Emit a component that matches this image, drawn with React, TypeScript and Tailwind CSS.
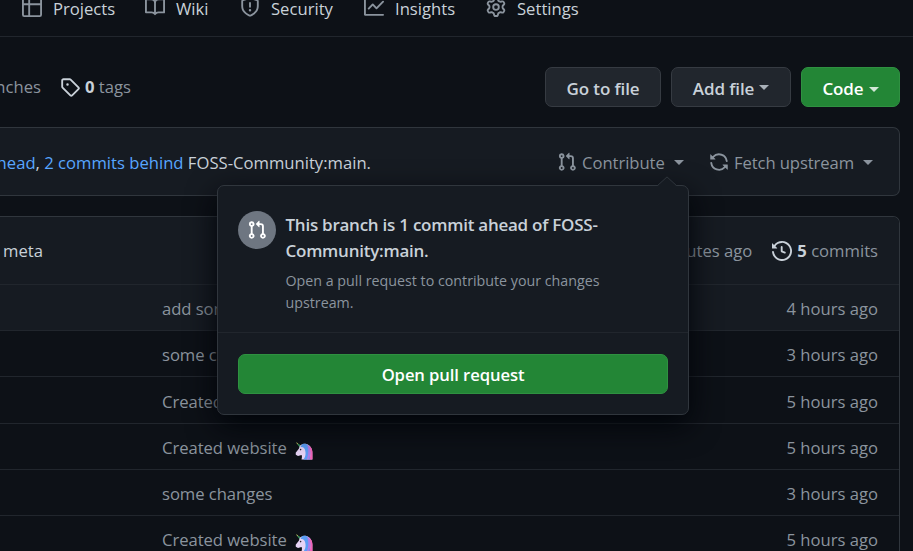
import type { ReactNode } from "react";

const ICONS = {
  table:
    "M0 1.75C0 .784.784 0 1.75 0h12.5C15.216 0 16 .784 16 1.75v3.585a.746.746 0 010 .83v8.085A1.75 1.75 0 0114.25 16H6.309a.748.748 0 01-1.118 0H1.75A1.75 1.75 0 010 14.25V6.165a.746.746 0 010-.83V1.75zM1.5 6.5v7.75c0 .138.112.25.25.25H5v-8H1.5zM6.5 6.5v8h7.75a.25.25 0 00.25-.25V6.5h-8zM14.5 5V1.75a.25.25 0 00-.25-.25H6.5V5h8zM5 5V1.5H1.75a.25.25 0 00-.25.25V5H5z",
  book: "M0 1.75A.75.75 0 01.75 1h4.253c1.227 0 2.317.59 3 1.501A3.744 3.744 0 0111.006 1h4.245a.75.75 0 01.75.75v10.5a.75.75 0 01-.75.75h-4.507a2.25 2.25 0 00-1.591.659l-.622.621a.75.75 0 01-1.06 0l-.622-.621A2.25 2.25 0 005.258 13H.75a.75.75 0 01-.75-.75V1.75zm8.755 3a2.25 2.25 0 012.25-2.25H14.5v9h-3.757c-.71 0-1.4.201-1.992.572l.004-7.322zm-1.504 7.324l.004-5.073-.002-2.253A2.25 2.25 0 005.003 2.5H1.5v9h3.757a3.75 3.75 0 011.994.574z",
  shield:
    "M7.467.133a1.75 1.75 0 011.066 0l5.25 1.68A1.75 1.75 0 0115 3.48V7c0 1.566-.32 3.182-1.303 4.682-.983 1.498-2.585 2.813-5.032 3.855a1.7 1.7 0 01-1.33 0c-2.447-1.042-4.049-2.357-5.032-3.855C1.32 10.182 1 8.566 1 7V3.48a1.75 1.75 0 011.217-1.667l5.25-1.68zm.61 1.429a.25.25 0 00-.153 0l-5.25 1.68a.25.25 0 00-.174.238V7c0 1.358.275 2.666 1.057 3.86.784 1.194 2.121 2.34 4.366 3.297a.2.2 0 00.154 0c2.245-.956 3.582-2.104 4.366-3.298C13.225 9.666 13.5 8.36 13.5 7V3.48a.25.25 0 00-.174-.237l-5.25-1.68zM9 10.5a1 1 0 11-2 0 1 1 0 012 0zm-.25-5.75a.75.75 0 10-1.5 0v3a.75.75 0 001.5 0v-3z",
  graph:
    "M1.5 1.75a.75.75 0 00-1.5 0v12.5c0 .414.336.75.75.75h14.5a.75.75 0 000-1.5H1.5V1.75zm14.28 2.53a.75.75 0 00-1.06-1.06L10 7.94 7.53 5.47a.75.75 0 00-1.06 0L3.22 8.72a.75.75 0 001.06 1.06L7 7.06l2.47 2.47a.75.75 0 001.06 0l5.25-5.25z",
  gear: "M7.429 1.525a6.593 6.593 0 011.142 0c.036.003.108.036.137.146l.289 1.105c.147.56.55.967.997 1.189.174.086.341.183.501.29.417.278.97.423 1.53.27l1.102-.303c.11-.03.175.016.195.046.219.31.41.641.573.989.014.031.022.11-.059.19l-.815.806c-.411.406-.562.957-.53 1.456a4.588 4.588 0 010 .582c-.032.499.119 1.05.53 1.456l.815.806c.08.08.073.159.059.19a6.494 6.494 0 01-.573.99c-.02.029-.086.074-.195.045l-1.103-.303c-.559-.153-1.112-.008-1.529.27-.16.107-.327.204-.5.29-.449.222-.851.628-.998 1.189l-.289 1.105c-.029.11-.101.143-.137.146a6.613 6.613 0 01-1.142 0c-.036-.003-.108-.037-.137-.146l-.289-1.105c-.147-.56-.55-.967-.997-1.189a4.502 4.502 0 01-.501-.29c-.417-.278-.97-.423-1.53-.27l-1.102.303c-.11.03-.175-.016-.195-.046a6.492 6.492 0 01-.573-.989c-.014-.031-.022-.11.059-.19l.815-.806c.411-.406.562-.957.53-1.456a4.587 4.587 0 010-.582c.032-.499-.119-1.05-.53-1.456l-.815-.806c-.08-.08-.073-.159-.059-.19a6.44 6.44 0 01.573-.99c.02-.029.086-.075.195-.045l1.103.303c.559.153 1.112.008 1.529-.27.16-.107.327-.204.5-.29.449-.222.851-.628.998-1.189l.289-1.105c.029-.11.101-.143.137-.146zM8 0c-.236 0-.47.01-.701.03-.743.065-1.29.615-1.458 1.261l-.29 1.106c-.017.066-.078.158-.211.224a5.994 5.994 0 00-.668.386c-.123.082-.233.09-.3.071L3.27 2.776c-.644-.177-1.392.02-1.82.63a7.977 7.977 0 00-.704 1.217c-.315.675-.111 1.422.363 1.891l.815.806c.05.048.098.147.088.294a6.084 6.084 0 000 .772c.01.147-.038.246-.088.294l-.815.806c-.474.469-.678 1.216-.363 1.891.2.428.436.835.704 1.218.428.609 1.176.806 1.82.63l1.103-.303c.066-.019.176-.011.299.071.213.143.436.272.668.386.133.066.194.158.212.224l.289 1.106c.169.646.715 1.196 1.458 1.26a8.094 8.094 0 001.402 0c.743-.064 1.29-.614 1.458-1.26l.29-1.106c.017-.066.078-.158.211-.224a5.98 5.98 0 00.668-.386c.123-.082.233-.09.3-.071l1.102.302c.644.177 1.392-.02 1.82-.63.268-.382.505-.789.704-1.217.315-.675.111-1.422-.364-1.891l-.814-.806c-.05-.048-.098-.147-.088-.294a6.1 6.1 0 000-.772c-.01-.147.039-.246.088-.294l.814-.806c.475-.469.679-1.216.364-1.891a7.992 7.992 0 00-.704-1.218c-.428-.609-1.176-.806-1.82-.63l-1.103.303c-.066.019-.176.011-.299-.071a5.991 5.991 0 00-.668-.386c-.133-.066-.194-.158-.212-.224L10.16 1.29C9.99.645 9.444.095 8.701.031A8.094 8.094 0 008 0zm1.5 8a1.5 1.5 0 11-3 0 1.5 1.5 0 013 0zM11 8a3 3 0 11-6 0 3 3 0 016 0z",
  tag: "M2.5 7.775V2.75a.25.25 0 01.25-.25h5.025a.25.25 0 01.177.073l6.25 6.25a.25.25 0 010 .354l-5.025 5.025a.25.25 0 01-.354 0l-6.25-6.25a.25.25 0 01-.073-.177zm-1.5 0V2.75C1 1.784 1.784 1 2.75 1h5.025c.464 0 .91.184 1.238.513l6.25 6.25a1.75 1.75 0 010 2.474l-5.026 5.026a1.75 1.75 0 01-2.474 0l-6.25-6.25A1.75 1.75 0 011 7.775zM6 5a1 1 0 100 2 1 1 0 000-2z",
  pull: "M7.177 3.073L9.573.677A.25.25 0 0110 .854v4.792a.25.25 0 01-.427.177L7.177 3.427a.25.25 0 010-.354zM3.75 2.5a.75.75 0 100 1.5.75.75 0 000-1.5zm-2.25.75a2.25 2.25 0 113 2.122v5.256a2.251 2.251 0 11-1.5 0V5.372A2.25 2.25 0 011.5 3.25zM11 2.5h-1V4h1a1 1 0 011 1v5.628a2.251 2.251 0 101.5 0V5A2.5 2.5 0 0011 2.5zm1 10.25a.75.75 0 111.5 0 .75.75 0 01-1.5 0zM3.75 12a.75.75 0 100 1.5.75.75 0 000-1.5z",
  sync: "M8 2.5a5.487 5.487 0 00-4.131 1.869l1.204 1.204A.25.25 0 014.896 6H1.25A.25.25 0 011 5.75V2.104a.25.25 0 01.427-.177l1.38 1.38A7.001 7.001 0 0114.95 7.16a.75.75 0 11-1.49.178A5.501 5.501 0 008 2.5zM1.705 8.005a.75.75 0 01.834.656 5.501 5.501 0 009.592 2.97l-1.204-1.204a.25.25 0 01.177-.427h3.646a.25.25 0 01.25.25v3.646a.25.25 0 01-.427.177l-1.38-1.38A7.001 7.001 0 011.05 8.84a.75.75 0 01.656-.834z",
  history:
    "M1.643 3.143L.427 1.927A.25.25 0 000 2.104V5.75c0 .138.112.25.25.25h3.646a.25.25 0 00.177-.427L2.715 4.215a6.5 6.5 0 11-1.18 4.458.75.75 0 10-1.493.154 8.001 8.001 0 101.6-5.684zM7.75 4a.75.75 0 01.75.75v2.992l2.028.812a.75.75 0 01-.557 1.392l-2.5-1A.75.75 0 017 8.25v-3.5A.75.75 0 017.75 4z",
};

function Icon({ name, className = "" }: { name: keyof typeof ICONS; className?: string }) {
  return (
    <svg viewBox="0 0 16 16" className={`size-5 shrink-0 ${className}`} fill="currentColor" fillRule="evenodd">
      <path d={ICONS[name]} />
    </svg>
  );
}

function Caret({ className = "" }: { className?: string }) {
  return (
    <svg viewBox="0 0 10 5" className={`h-[5px] w-[10px] shrink-0 ${className}`} fill="currentColor">
      <path d="M0 0h10L5 5z" />
    </svg>
  );
}

function Unicorn() {
  return (
    <svg viewBox="0 0 18 18" className="mt-[4px] ml-[8px] size-[18px] shrink-0">
      <path d="M1 0.3 6 3.6 4.4 5z" fill="#3c9a63" />
      <path d="M1 .3 3 1.2 2.6 2.6z" fill="#c9b458" />
      <path d="M4.5 4.5C6 2 9 1.3 11.5 2c3.500 1 5.800 4.500 5.800 8.500V17.500H6.500c.5-2 .7-3.500 0-4.500L3 14 .8 12.800.7 10.800 4 6.500z" fill="#e6d3f5" />
      <path d="M7 2.300C11 .8 14.500 3 15.300 7c.6 3 .2 7-.3 10.500H8.500c2.300-3 2.300-6 1.800-8.500C10 6.500 8.500 4.500 5.500 5z" fill="#5b9df5" />
      <path d="M12 2.600c3 1.400 4 4.400 3.700 8-.2 2.600-1 4.600-2.200 6.900h-1.800c1.800-4 2.300-10 .3-14.900z" fill="#b07be6" />
      <path d="M14 3.600c2.700 1.800 3.800 5 3.500 8.400V17.500H14.500c1.300-4 1.500-9.500-.5-13.900z" fill="#f062b8" />
      <circle cx="5.600" cy="7.600" r=".8" fill="#29222f" />
    </svg>
  );
}

function NavItem({ icon, label, width }: { icon: keyof typeof ICONS; label: string; width: string }) {
  return (
    <a className={`flex shrink-0 items-start ${width}`}>
      <Icon name={icon} className="-mt-[3px] text-[#8b949e]" />
      <span className="ml-[11px] leading-[18px] text-[#c9d1d9]">{label}</span>
    </a>
  );
}

function Button({ className, children }: { className: string; children: ReactNode }) {
  return (
    <button className={`flex h-10 items-center justify-center rounded-[7px] border pt-[3px] font-semibold ${className}`}>
      {children}
    </button>
  );
}

const ROWS = [
  { message: "add some files", time: "4 hours ago", unicorn: false, style: "h-[46px] bg-[#161b22]" },
  { message: "some changes", time: "3 hours ago", unicorn: false, style: "h-[46px]" },
  { message: "Created website", time: "5 hours ago", unicorn: true, style: "h-[47px]" },
  { message: "Created website", time: "5 hours ago", unicorn: true, style: "h-[46px]" },
  { message: "some changes", time: "3 hours ago", unicorn: false, style: "h-[46px]" },
  { message: "Created website", time: "5 hours ago", unicorn: true, style: "h-[46px]" },
];

function Popover() {
  return (
    <div className="absolute top-[185px] left-[217px] h-[230px] w-[472px] rounded-[7px] border border-[#30363d] bg-[#161b22] shadow-[0_10px_30px_#010409]">
      <svg viewBox="0 0 20 10" className="absolute -top-[10px] left-[439px] h-[10px] w-[20px]">
        <path d="M0.500 10 10 .9 19.500 10z" fill="#161b22" />
        <path d="M0.500 9.600 10 .9 19.500 9.600" fill="none" stroke="#30363d" />
      </svg>
      <div className="flex h-[147px] gap-[10px] border-b border-[#21262d] pt-[25px] pl-[20px]">
        <div className="flex size-[38px] shrink-0 items-center justify-center rounded-full bg-[#6e7681] text-white">
          <Icon name="pull" />
        </div>
        <div className="-ml-[0.5px] pt-px">
          <h4 className="text-[17px] leading-[26px] font-semibold tracking-[-0.25px] text-[#c9d1d9]">
            This branch is 1 commit ahead of FOSS-
            <br />
            Community:main.
          </h4>
          <p className="mt-[6px] text-[14.25px] leading-[22px] text-[#8b949e]">
            Open a pull request to contribute your changes
            <br />
            upstream.
          </p>
        </div>
      </div>
      <div className="px-[20px] pt-[21px]">
        <Button className="w-full border-[#2f9141] bg-[#238636] tracking-[-0.1px] text-white">Open pull request</Button>
      </div>
    </div>
  );
}

export default function App() {
  return (
    <div className="relative h-[551px] w-[913px] overflow-hidden bg-[#0d1117] font-['Open_Sans','Noto_Sans',sans-serif] text-[16.65px] whitespace-nowrap text-[#c9d1d9]">
      <nav className="flex h-[37px] items-start border-b border-[#21262d] pl-[22px]">
        <NavItem icon="table" label="Projects" width="w-[123px]" />
        <NavItem icon="book" label="Wiki" width="w-[95px]" />
        <NavItem icon="shield" label="Security" width="w-[124px]" />
        <NavItem icon="graph" label="Insights" width="w-[122px]" />
        <NavItem icon="gear" label="Settings" width="w-[120px]" />
      </nav>

      <div className="flex h-[90px] items-center pt-[10px] pr-[13px]">
        <div className="flex w-[41px] justify-end text-[#8b949e]">branches</div>
        <Icon name="tag" className="ml-[19px]" />
        <div className="ml-[5px] text-[#8b949e]">
          <b className="font-bold text-[#c9d1d9]">0</b> tags
        </div>
        <div className="ml-auto flex gap-[10px] text-[17px] tracking-[-0.1px]">
          <Button className="w-[116px] border-[#363b42] bg-[#21262d]">Go to file</Button>
          <Button className="w-[120px] border-[#363b42] bg-[#21262d]">
            Add file
            <Caret className="mb-[3px] ml-[5px] text-[#a9b0b8]" />
          </Button>
          <Button className="w-[99px] border-[#2f9141] bg-[#238636] text-white">
            Code
            <Caret className="mt-[2px] ml-[5px] text-[#d3e7d7]" />
          </Button>
        </div>
      </div>

      <section className="flex h-[69px] w-[900px] items-center rounded-r-[7px] border border-l-0 border-[#30363d] bg-[#161b22] pt-[3px]">
        <div className="flex w-[371px] justify-end">
          <p>
            <span className="text-[#58a6ff]">1 commit ahead</span>,{" "}
            <span className="text-[#58a6ff]">2 commits behind</span> FOSS-Community:main.
          </p>
        </div>
        <div className="ml-[186px] flex w-[152px] items-center tracking-[-0.05px] text-[#8b949e]">
          <Icon name="pull" className="-mt-px" />
          <span className="ml-[5px] w-[92px]">Contribute</span>
          <Caret />
        </div>
        <div className="flex items-center tracking-[-0.1px] text-[#8b949e]">
          <Icon name="sync" className="-mt-px" />
          <span className="ml-[5px] w-[129px]">Fetch upstream</span>
          <Caret />
        </div>
      </section>

      <section className="mt-[20px] h-[340px] w-[900px] rounded-tr-[7px] border-t border-r border-[#30363d]">
        <header className="flex h-[67px] items-center rounded-tr-[6px] bg-[#161b22] pt-[2px] pr-[21px] pl-[3px]">
          <span>meta</span>
          <span className="ml-auto text-[#8b949e]">26 minutes ago</span>
          <Icon name="history" className="-mt-[2px] ml-[20px]" />
          <span className="ml-[5px] text-[#8b949e]">
            <b className="font-bold text-[#c9d1d9]">5</b> commits
          </span>
        </header>
        {ROWS.map((row, i) => (
          <div
            key={i}
            className={`flex items-center border-t border-[#21262d] pt-[4px] pr-[21px] pl-[162px] text-[#8b949e] ${row.style}`}
          >
            <span className="tracking-[-0.05px]">{row.message}</span>
            {row.unicorn && <Unicorn />}
            <span className="ml-auto">{row.time}</span>
          </div>
        ))}
      </section>

      <Popover />
    </div>
  );
}
